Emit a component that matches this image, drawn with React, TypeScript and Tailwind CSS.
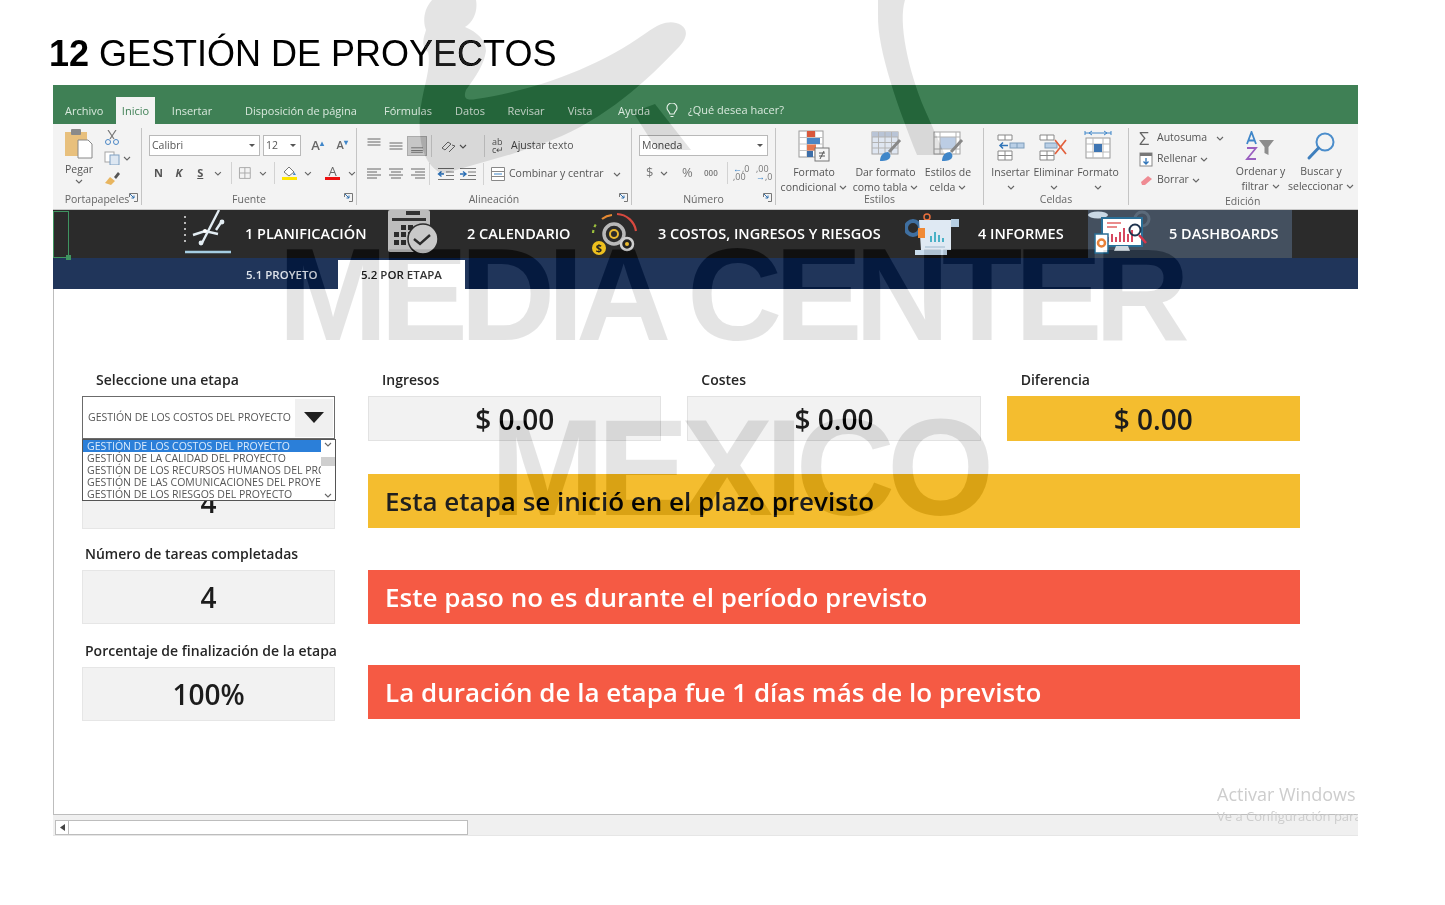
import React from "react";

const UI = "font-['Open_Sans','Noto_Sans',sans-serif]";

const Chev = ({ className = "" }: { className?: string }) => (
  <svg width="8" height="5" viewBox="0 0 8 5" className={className}>
    <path d="M1 1l3 3 3-3" fill="none" stroke="#666" strokeWidth="1.1" />
  </svg>
);

const Lines = ({ rows, pressed }: { rows: [number, number][]; pressed?: boolean }) => (
  <svg width="20" height="20" viewBox="0 0 20 20" className={pressed ? "bg-[#c6c6c6] border border-[#ababab]" : ""}>
    {rows.map(([y, w], i) => (
      <path key={i} d={`M${(20 - w) / 2} ${y}h${w}`} stroke="#666" strokeWidth="1" />
    ))}
  </svg>
);
const AlignI = ({ a }: { a: "l" | "c" | "r" }) => (
  <svg width="16" height="14" viewBox="0 0 16 14">
    {[[2, 14], [5, 10], [8, 14], [11, 10]].map(([y, w], i) => (
      <path key={i} d={`M${a === "l" ? 1 : a === "c" ? 8 - w / 2 : 15 - w} ${y}h${w}`} stroke="#666" strokeWidth="1" />
    ))}
  </svg>
);
const Indent = ({ right }: { right?: boolean }) => (
  <svg width="18" height="14" viewBox="0 0 18 14">
    <path d="M1 1.5h16M9 5h8M9 8.500h8M1 12.500h16" stroke="#777" strokeWidth="1" />
    <path d={right ? "M1 7h5M4 4.500L7 7 4 9.500" : "M7 7H2M4.500 4.500L1.500 7l3 2.500"} stroke="#2b6fb5" strokeWidth="1.4" fill="none" />
  </svg>
);
const Sep = () => <div className="w-px h-[22px] bg-[#d2d2d2]" />;
const Launcher = () => (
  <svg width="9" height="9" viewBox="0 0 9 9" className="absolute right-[3px] bottom-[3px]">
    <path d="M.5 4V.5H8.500V8.500H5" fill="none" stroke="#777" />
    <path d="M1 1l4 4M5 2.500V5H2.500" fill="none" stroke="#2f6fae" />
  </svg>
);

const Group = ({ w, label, launcher, children }: { w: string; label: string; launcher?: boolean; children: React.ReactNode }) => (
  <div className={`${w} relative flex flex-col border-r border-[#c4c4c4] my-[4px]`}>
    <div className="flex-1 min-h-0 relative">{children}</div>
    <div className="h-[14px] leading-[14px] text-center text-[10.5px] text-[#666] -mb-[1px]">{label}</div>
    {launcher && <Launcher />}
  </div>
);

const Sel = ({ w, text }: { w: string; text: string }) => (
  <div className={`${w} h-[21px] bg-white border border-[#b9b9b9] flex items-center justify-between px-[2px] text-[10.5px] text-[#555]`}>
    <span>{text}</span>
    <svg width="6" height="4" viewBox="0 0 6 4" className="mr-[2px]"><path d="M0 0h6L3 3z" fill="#555" /></svg>
  </div>
);

const Big = ({ w, l1, l2, chev2, icon }: { w: string; l1: string; l2?: string; chev2?: boolean; icon: React.ReactNode }) => (
  <div className={`${w} flex flex-col items-center text-[10.5px] leading-[15px] text-[#555]`}>
    <div className="h-[33px] flex items-end justify-center mb-[3px]">{icon}</div>
    <div className="whitespace-nowrap">{l1}</div>
    <div className="whitespace-nowrap flex items-center gap-[3px] h-[15px]">{l2 && <span>{l2}</span>}{chev2 && <Chev />}</div>
  </div>
);

const CondIcon = () => (
  <svg width="32" height="32" viewBox="0 0 32 32">
    <rect x="1" y="1" width="24" height="26" fill="#fff" stroke="#9a9a9a" />
    <path d="M9 1v26M17 1v26M1 7.500h24M1 14h24M1 20.500h24" stroke="#c2c2c2" />
    <rect x="9" y="1" width="8" height="6" fill="#d9583b" />
    <rect x="9" y="8" width="13" height="6" fill="#4a86c5" />
    <rect x="9" y="14.500" width="9" height="6" fill="#e5774f" />
    <rect x="9" y="21" width="6" height="6" fill="#3d6ea8" />
    <rect x="17" y="18" width="14" height="13" fill="#f5f5f5" stroke="#777" />
    <path d="M21 23h6M21 26h6M26 21l-4 8" stroke="#555" fill="none" />
  </svg>
);
const TableIcon = () => (
  <svg width="32" height="32" viewBox="0 0 32 32">
    <rect x="2" y="2" width="26" height="22" fill="#dfe6f1" stroke="#a4a4a4" />
    <rect x="2" y="2" width="26" height="5" fill="#b9c4d6" />
    <path d="M8.500 2v22M15 2v22M21.500 2v22M2 7h26M2 12.500h26M2 18h26" stroke="#b3b3b3" />
    <path d="M30 10L19 22" stroke="#888" strokeWidth="3" />
    <path d="M10 31c0-6 4-9 8-9 3 2 3 5 1 7-3 2-6 2-9 2z" fill="#3f86c9" />
  </svg>
);
const CellStyleIcon = () => (
  <svg width="32" height="32" viewBox="0 0 32 32">
    <rect x="2" y="2" width="26" height="22" fill="#fff" stroke="#a4a4a4" />
    <rect x="8" y="7" width="16" height="12" fill="#bccde4" />
    <path d="M2 7h26M8 2v22M2 19h26M24 2v22" stroke="#b3b3b3" />
    <path d="M30 10L19 22" stroke="#888" strokeWidth="3" />
    <path d="M10 31c0-6 4-9 8-9 3 2 3 5 1 7-3 2-6 2-9 2z" fill="#3f86c9" />
  </svg>
);
const InsertIcon = () => (
  <svg width="28" height="28" viewBox="0 0 28 28">
    <path d="M1 1h14v5H1zM8 1v5M1 17h14v9H1zM8 17v9M1 21.500h14" fill="#fff" stroke="#888" />
    <rect x="13" y="9" width="14" height="5" fill="#b9cfe6" stroke="#7f9ebc" />
    <path d="M20 9v5" stroke="#7f9ebc" />
    <path d="M11 11.500H3M6 8.500l-3 3 3 3" fill="none" stroke="#2f74b8" strokeWidth="1.500" />
  </svg>
);
const DeleteIcon = () => (
  <svg width="30" height="28" viewBox="0 0 30 28">
    <path d="M1 1h14v5H1zM8 1v5M1 17h14v9H1zM8 17v9M1 21.500h14" fill="#fff" stroke="#888" />
    <rect x="6" y="9" width="12" height="5" fill="#b9cfe6" stroke="#7f9ebc" />
    <path d="M16 6l11 14M27 6L16 20" stroke="#e2603d" strokeWidth="1.700" />
  </svg>
);
const FormatIcon = () => (
  <svg width="28" height="32" viewBox="0 0 28 32">
    <path d="M1 3h26M1 1v4M27 1v4M5 3l3-2M5 3l3 2M23 3l-3-2M23 3l-3 2" stroke="#3f86c9" fill="none" />
    <rect x="2" y="8" width="24" height="20" fill="#fff" stroke="#999" />
    <path d="M9 8v20M19 8v20M2 14h24M2 22h24" stroke="#bbb" />
    <rect x="10" y="14" width="8" height="8" fill="#3f76b3" />
  </svg>
);
const SortIcon = () => (
  <svg width="32" height="30" viewBox="0 0 32 30">
    <path d="M2 13L6.500 1 11 13M3.500 9.500h6" fill="none" stroke="#3f86c9" strokeWidth="1.800" />
    <path d="M2 17h9L2 28h9" fill="none" stroke="#9a5fc0" strokeWidth="1.800" />
    <path d="M14 9h15l-5.500 7v8l-4 -2v-6z" fill="#8d8d8d" />
  </svg>
);
const SearchIcon = () => (
  <svg width="30" height="30" viewBox="0 0 30 30">
    <circle cx="19" cy="11" r="8.500" fill="none" stroke="#4b8dcb" strokeWidth="2" />
    <path d="M12.500 17L3 27" stroke="#3f7fbd" strokeWidth="3" strokeLinecap="round" />
  </svg>
);

const NavPlan = () => (
  <svg width="52" height="48" viewBox="0 0 52 48">
    <path d="M2 6v28" stroke="#ddd" strokeWidth="1.600" strokeDasharray="2 4" />
    <path d="M10 25l12 -4 13 3M36 0L19 33M33 20l6-9" stroke="#e3edf3" strokeWidth="2.400" fill="none" />
    <circle cx="22" cy="21" r="2" fill="#fff" /><circle cx="18" cy="33" r="2.400" fill="#e3edf3" /><circle cx="39" cy="12" r="2.400" fill="#e3edf3" />
    <path d="M2 42h46" stroke="#a5cde2" strokeWidth="2.600" />
  </svg>
);
const NavCal = () => (
  <svg width="54" height="48" viewBox="0 0 54 48">
    <rect x="2" y="0" width="42" height="42" rx="2" fill="#bdbdbd" />
    <rect x="20" y="1" width="14" height="4" fill="#333" />
    <rect x="6" y="8" width="34" height="3" fill="#333" />
    {[[8, 22], [15, 22], [22, 22], [8, 30], [15, 30], [15, 15], [22, 15]].map(([x, y], i) => (
      <rect key={i} x={x} y={y} width="5" height="5" fill="#2b2b2b" />
    ))}
    <circle cx="37" cy="29" r="15" fill="#c9c9c9" stroke="#2b2b2b" strokeWidth="1.500" />
    <path d="M28 29l6 5 10-9" fill="none" stroke="#2b2b2b" strokeWidth="2.400" />
  </svg>
);
const NavCost = () => (
  <svg width="50" height="46" viewBox="0 0 50 46">
    <path d="M27 3a20 20 0 0 1 19 17" fill="none" stroke="#d8493f" strokeWidth="2.200" />
    <path d="M12 8a20 20 0 0 1 10-4" fill="none" stroke="#e88a32" strokeWidth="2.200" />
    <path d="M3 22a20 20 0 0 1 3-9" fill="none" stroke="#9bbf3d" strokeWidth="2.200" strokeDasharray="3 3" />
    <circle cx="24" cy="23" r="10" fill="none" stroke="#b9b9b9" strokeWidth="3.500" />
    <circle cx="24" cy="23" r="4" fill="none" stroke="#e9b92f" strokeWidth="2" />
    <circle cx="37" cy="33" r="6" fill="#222" stroke="#cfcfcf" strokeWidth="2.500" />
    <circle cx="37" cy="33" r="2" fill="#e9b92f" />
    <circle cx="9" cy="37" r="7" fill="#eec01e" />
    <text x="9" y="41" fontSize="11" fontWeight="700" textAnchor="middle" fill="#222">$</text>
  </svg>
);
const NavInf = () => (
  <svg width="56" height="44" viewBox="0 0 56 44">
    <circle cx="8" cy="16" r="7" fill="none" stroke="#3f6fa0" strokeWidth="4" />
    <circle cx="22" cy="5" r="3" fill="none" stroke="#e8703d" strokeWidth="1.500" />
    <path d="M14 8h36l4 3v4h-8v23H16z" fill="#dfe9f3" />
    <path d="M46 7h8v8h-8z" fill="#b7cfe3" />
    <rect x="13" y="16" width="7" height="10" fill="#f08a36" />
    <path d="M26 30v-6M30 30v-10M34 30v-7M38 30v-4" stroke="#4ab1c6" strokeWidth="2" />
    <path d="M10 38h32v5H10z" fill="#c9dcec" />
    <path d="M20 35h20" stroke="#9db8cc" />
  </svg>
);
const NavDash = () => (
  <svg width="66" height="48" viewBox="0 0 66 48">
    <ellipse cx="10" cy="5" rx="10" ry="3.500" fill="#c9d8e5" />
    <circle cx="54" cy="9" r="7" fill="none" stroke="#5b6a7a" strokeWidth="3" />
    <rect x="14" y="8" width="40" height="28" fill="#fff" stroke="#2a6f97" strokeWidth="2" />
    <path d="M19 13h14M19 17h10" stroke="#e98b8b" strokeWidth="2" />
    <path d="M20 32v-5M24 32v-8M28 32v-5M32 32v-10M36 32v-14M40 32v-8M44 32v-12" stroke="#d2354f" strokeWidth="1.800" />
    <path d="M28 36h12l2 5H26z" fill="#cfd8df" />
    <rect x="7" y="24" width="13" height="19" fill="#fff" stroke="#2a6f97" strokeWidth="1.500" />
    <circle cx="13.500" cy="33" r="3.500" fill="none" stroke="#e8823a" strokeWidth="2.500" />
    <circle cx="47" cy="20" r="5.500" fill="none" stroke="#20344f" strokeWidth="2" />
    <path d="M51 25l7 8" stroke="#d8354a" strokeWidth="2.500" />
  </svg>
);

const Lbl = ({ className = "", children }: { className?: string; children: React.ReactNode }) => (
  <div className={`h-[20px] leading-[20px] text-[14px] font-semibold text-[#262626] whitespace-nowrap ${className}`}>{children}</div>
);

const Box = ({ className = "", children }: { className?: string; children: React.ReactNode }) => (
  <div className={`border border-[#e6e6e6] bg-[#f2f2f2] flex items-center justify-center font-semibold text-[#1c1c1c] ${className}`}>{children}</div>
);

const Banner = ({ className = "", children }: { className?: string; children: React.ReactNode }) => (
  <div className={`h-[54px] flex items-center pl-[17px] text-[26px] font-semibold whitespace-nowrap ${className}`}>{children}</div>
);

const tabs: [string, string][] = [
  ["Insertar", "w-[74px]"],
  ["Disposición de página", "w-[144px]"],
  ["Fórmulas", "w-[70px]"],
  ["Datos", "w-[54px]"],
  ["Revisar", "w-[58px]"],
  ["Vista", "w-[50px]"],
  ["Ayuda", "w-[58px]"],
];

const options = [
  "GESTIÓN DE LA CALIDAD DEL PROYECTO",
  "GESTIÓN DE LOS RECURSOS HUMANOS DEL PROYECTO",
  "GESTIÓN DE LAS COMUNICACIONES DEL PROYECTO",
  "GESTIÓN DE LOS RIESGOS DEL PROYECTO",
];

export default function App() {
  return (
    <div className={`relative isolate bg-white w-[1445px] h-[905px] overflow-hidden ${UI}`}>
      <h1 className="h-[85px] pl-[49px] pt-[31px] text-[36px] leading-[46px] text-black font-['Liberation_Sans',sans-serif] font-normal whitespace-nowrap">
        <b>12</b> GESTIÓN DE PROYECTOS
      </h1>

      <div className="ml-[53px] w-[1305px]">
        {/* green title + tabs */}
        <div className="h-[39px] bg-[#3f8055] pt-[12px] pl-[0px] flex text-[11px] text-[#d9e8dd]">
          <div className="w-[63px] h-[27px] leading-[27px] pl-[12px]">Archivo</div>
          <div className="w-[39px] h-[27px] leading-[27px] text-center bg-[#f3f3f3] text-[#3f8055]">Inicio</div>
          {tabs.map(([t, w]) => (
            <div key={t} className={`${w} h-[27px] leading-[27px] text-center whitespace-nowrap`}>{t}</div>
          ))}
          <div className="flex items-center gap-[10px] h-[27px] ml-[3px]">
            <svg width="12" height="15" viewBox="0 0 12 15"><path d="M4 11C3.500 8.500 1 7.500 1 5a5 5 0 0 1 10 0c0 2.500-2.500 3.500-3 6zM4.500 13.500h3" fill="none" stroke="#e8f1ea" strokeWidth="1.100" /></svg>
            <span>¿Qué desea hacer?</span>
          </div>
        </div>

        {/* ribbon */}
        <div className="h-[86px] bg-[#f3f3f3] border-b border-[#c9c9c9] flex text-[#555]">
          <Group w="w-[89px]" label="Portapapeles" launcher>
            <div className="flex h-full pt-[1px]">
              <div className="w-[51px] flex flex-col items-center pl-[1px] text-[10.5px] leading-[14px]">
                <svg width="30" height="30" viewBox="0 0 30 30">
                  <rect x="1" y="3" width="22" height="24" fill="#e8c07d" />
                  <rect x="7" y="0" width="10" height="6" rx="1" fill="#8a8a8a" />
                  <path d="M14 11h10l4 4v14H14z" fill="#fff" stroke="#888" />
                </svg>
                <div className="mt-[3px]">Pegar</div>
                <Chev className="mt-[3px]" />
              </div>
              <div className="flex flex-col gap-[6px] pt-[1px]">
                <svg width="16" height="15" viewBox="0 0 16 15"><path d="M4 0l6 9M12 0L6 9" stroke="#777" strokeWidth="1.200" /><circle cx="4" cy="12" r="2.500" fill="none" stroke="#4a86c5" /><circle cx="12" cy="12" r="2.500" fill="none" stroke="#4a86c5" /></svg>
                <div className="flex items-center gap-[3px]">
                  <svg width="16" height="14" viewBox="0 0 16 14"><rect x="1" y="1" width="9" height="10" fill="#fff" stroke="#a5a5a5" /><rect x="6" y="4" width="9" height="10" fill="#dde7f2" stroke="#7fa0c2" /></svg>
                  <Chev />
                </div>
                <svg width="16" height="14" viewBox="0 0 16 14"><path d="M10 6l4-5 2 2-4 5z" fill="#555" /><path d="M1 12l5-6 5 4-4 4z" fill="#e8b55f" /></svg>
              </div>
            </div>
          </Group>

          <Group w="w-[215px]" label="Fuente" launcher>
            <div className="pl-[7px] pt-[7px] flex flex-col">
              <div className="flex items-center gap-[3px]">
                <Sel w="w-[114px]" text="Calibri" />
                <Sel w="w-[39px]" text="12" />
                <span className="ml-[7px] w-[23px] text-[13px] text-[#666] font-semibold">A<sup className="text-[#3f86c9] text-[8px]">▴</sup></span>
                <span className="w-[20px] text-[11px] text-[#666] font-semibold">A<sup className="text-[#3f86c9] text-[8px]">▾</sup></span>
              </div>
              <div className="flex items-center h-[22px] mt-[6px] pl-[5px] text-[11px] font-bold text-[#555]">
                <span className="w-[22px]">N</span>
                <span className="w-[22px] italic">K</span>
                <span className="w-[17px] underline">S</span>
                <Chev className="mr-[9px]" />
                <Sep />
                <svg width="16" height="14" viewBox="0 0 16 14" className="ml-[5px] mr-[7px]"><path d="M2.500 1.500h11v11h-11zM8 1.500v11M2.500 7h11" fill="none" stroke="#aaa" /></svg>
                <Chev className="mr-[7px]" />
                <Sep />
                <div className="ml-[6px] mr-[7px] w-[16px] flex flex-col items-center">
                  <svg width="16" height="11" viewBox="0 0 16 11"><path d="M3 6l5-5 5 5-5 4z" fill="#fff" stroke="#777" /><path d="M13 6l2 3h-3z" fill="#3f86c9" /></svg>
                  <div className="w-[15px] h-[3px] bg-[#ffe600]" />
                </div>
                <Chev className="mr-[13px]" />
                <div className="w-[15px] flex flex-col items-center leading-[11px] mr-[8px]">
                  <span className="text-[13px] font-normal h-[11px] text-[#666]">A</span>
                  <div className="w-[15px] h-[3px] bg-[#ee1111]" />
                </div>
                <Chev />
              </div>
            </div>
          </Group>

          <Group w="w-[275px]" label="Alineación" launcher>
            <div className="pl-[7px] pt-[7px] flex flex-col">
              <div className="flex items-center h-[22px]">
                <div className="flex w-[67px] items-center justify-between pr-[4px]">
                  <Lines rows={[[3, 13], [6, 13], [9, 13]]} />
                  <Lines rows={[[7, 13], [10, 13], [13, 13]]} />
                  <Lines rows={[[12, 13], [15, 13], [17, 13]]} pressed />
                </div>
                <Sep />
                <svg width="16" height="15" viewBox="0 0 16 15" className="ml-[8px]"><path d="M2 9l6-6 3 2-6 6zM12 6l3 1-6 6" fill="none" stroke="#777" /></svg>
                <Chev className="ml-[3px] mr-[17px]" />
                <Sep />
                <span className="ml-[7px] w-[16px] text-[9px] leading-[8px] text-[#666]">ab<br />c↵</span>
                <span className="ml-[3px] text-[10.5px]">Ajustar texto</span>
              </div>
              <div className="flex items-center h-[22px] mt-[6px]">
                <div className="flex w-[65px] items-center justify-between pl-[2px] pr-[3px]">
                  <AlignI a="l" /><AlignI a="c" /><AlignI a="r" />
                </div>
                <Sep />
                <div className="flex gap-[4px] ml-[7px] mr-[6px]"><Indent /><Indent right /></div>
                <Sep />
                <svg width="14" height="14" viewBox="0 0 14 14" className="ml-[7px]"><path d="M.5.500h13v13H.5zM.5 4.500h13M.5 9.500h13" fill="#fff" stroke="#888" /><path d="M3 7h8" stroke="#3f86c9" /></svg>
                <span className="ml-[4px] text-[10.5px] whitespace-nowrap">Combinar y centrar</span>
                <Chev className="ml-[9px]" />
              </div>
            </div>
          </Group>

          <Group w="w-[144px]" label="Número" launcher>
            <div className="pl-[7px] pt-[7px] flex flex-col">
              <Sel w="w-[129px]" text="Moneda" />
              <div className="flex items-center h-[22px] mt-[6px] pl-[7px] text-[#777]">
                <span className="text-[13px] w-[14px]">$</span>
                <Chev className="mr-[14px]" />
                <span className="text-[13px] w-[22px]">%</span>
                <span className="text-[8px] w-[23px] font-semibold">000</span>
                <Sep />
                <span className="ml-[5px] w-[23px] text-[9px] leading-[8px]"><span className="text-[#3f86c9]">←</span>,0<br />,00</span>
                <span className="w-[18px] text-[9px] leading-[8px]">,00<br /><span className="text-[#3f86c9]">→</span>,0</span>
              </div>
            </div>
          </Group>

          <Group w="w-[208px]" label="Estilos">
            <div className="flex pt-[1px] pl-[3px]">
              <Big w="w-[70px]" l1="Formato" l2="condicional" chev2 icon={<CondIcon />} />
              <Big w="w-[73px]" l1="Dar formato" l2="como tabla" chev2 icon={<TableIcon />} />
              <Big w="w-[52px]" l1="Estilos de" l2="celda" chev2 icon={<CellStyleIcon />} />
            </div>
          </Group>

          <Group w="w-[145px]" label="Celdas">
            <div className="flex pt-[1px] pl-[5px]">
              <Big w="w-[43px]" l1="Insertar" chev2 icon={<InsertIcon />} />
              <Big w="w-[43px]" l1="Eliminar" chev2 icon={<DeleteIcon />} />
              <Big w="w-[46px]" l1="Formato" chev2 icon={<FormatIcon />} />
            </div>
          </Group>

          <div className="flex-1 my-[4px] flex flex-col relative">
            <div className="flex-1 flex pl-[10px]">
              <div className="w-[94px] flex flex-col gap-[3px] text-[10.5px] pt-[1px]">
                <div className="flex items-center h-[18px] gap-[3px]">
                  <span className="w-[15px] text-[18px] leading-[18px] text-[#666]">Σ</span>
                  <span>Autosuma</span>
                  <Chev className="ml-[6px]" />
                </div>
                <div className="flex items-center h-[18px] gap-[3px]">
                  <svg width="15" height="15" viewBox="0 0 15 15"><rect x="1" y="1" width="12" height="13" fill="#fff" stroke="#888" /><rect x="1" y="1" width="12" height="3" fill="#777" /><path d="M7 6v6M4.500 9.500L7 12l2.500-2.500" fill="none" stroke="#2f74b8" strokeWidth="1.300" /></svg>
                  <span>Rellenar</span><Chev />
                </div>
                <div className="flex items-center h-[18px] gap-[3px]">
                  <svg width="15" height="13" viewBox="0 0 15 13"><path d="M2 8l7-6 4 3-7 6H3z" fill="#ef8b93" /></svg>
                  <span>Borrar</span><Chev />
                </div>
              </div>
              <Big w="w-[55px]" l1="Ordenar y" l2="filtrar" chev2 icon={<SortIcon />} />
              <Big w="w-[66px]" l1="Buscar y" l2="seleccionar" chev2 icon={<SearchIcon />} />
            </div>
            <div className="h-[14px] leading-[14px] -mb-[1px] text-[10.5px] text-[#666] pl-[96px]">Edición</div>
          </div>
        </div>

        {/* dark nav */}
        <div className="h-[48px] bg-[#2b2b2b] flex items-center text-white text-[14.5px] font-semibold whitespace-nowrap">
          <div className="w-[16px] h-[47px] border-[1.5px] border-[#3f9460] relative">
            <div className="absolute -bottom-[3px] -right-[3px] w-[5px] h-[5px] bg-[#3f9460]" />
          </div>
          <div className="ml-[114px] w-[52px]"><NavPlan /></div>
          <div className="ml-[10px] w-[141px]">1 PLANIFICACIÓN</div>
          <div className="w-[54px]"><NavCal /></div>
          <div className="ml-[27px] w-[123px]">2 CALENDARIO</div>
          <div className="w-[50px]"><NavCost /></div>
          <div className="ml-[18px] w-[247px]">3 COSTOS, INGRESOS Y RIESGOS</div>
          <div className="w-[56px]"><NavInf /></div>
          <div className="ml-[17px] w-[110px]">4 INFORMES</div>
          <div className="w-[204px] h-[48px] bg-[#44505f] flex items-center">
            <NavDash />
            <span className="ml-[15px]">5 DASHBOARDS</span>
          </div>
        </div>

        {/* navy sub tabs */}
        <div className="h-[31px] bg-[#20355a] flex items-end text-[11.5px] font-semibold whitespace-nowrap">
          <div className="ml-[193px] w-[92px] h-[31px] leading-[33px] text-[#dfe4ec]">5.1 PROYETO</div>
          <div className="w-[127px] h-[29px] leading-[29px] bg-white text-[#333] text-center">5.2 POR ETAPA</div>
        </div>

        {/* sheet */}
        <div className="h-[526px] bg-white border-l border-b border-[#bdbdbd] flex pl-[28px]">
          <div className="relative w-[253px] pt-[81px] shrink-0">
            <Lbl className="ml-[14px] mb-[6px]">Seleccione una etapa</Lbl>
            <div className="h-[43px] border-[1.5px] border-[#6b6b6b] flex items-center bg-white">
              <span className="pl-[5px] text-[10.5px] text-[#555] whitespace-nowrap flex-1 font-medium">GESTIÓN DE LOS COSTOS DEL PROYECTO</span>
              <div className="w-[38px] h-[38px] bg-[#f0f0f0] flex items-center justify-center mr-[1px]">
                <svg width="20" height="11" viewBox="0 0 20 11"><path d="M0 0h20L10 11z" fill="#1f1f1f" /></svg>
              </div>
            </div>

            {/* open list */}
            <div className="absolute z-10 left-0 top-[150px] w-[254px] h-[62px] bg-white border border-[#555] flex text-[10.5px] leading-[12px] text-[#555] font-medium overflow-hidden">
              <div className="w-[238px] overflow-hidden whitespace-nowrap pl-0">
                <div className="h-[12px] bg-[#2b7fd9] text-[#dcebfb] pl-[4px]">GESTIÓN DE LOS COSTOS DEL PROYECTO</div>
                {options.map((o) => (
                  <div key={o} className="h-[12px] pl-[4px]">{o}</div>
                ))}
              </div>
              <div className="flex-1 flex flex-col items-center justify-between py-[2px]">
                <Chev />
                <div className="w-[14px] h-[9px] bg-[#cfcfcf] -mt-[18px]" />
                <Chev className="rotate-0" />
              </div>
            </div>

            <Box className="h-[54px] mt-[36px] text-[28px]">4</Box>
            <Lbl className="ml-[3px] mt-[15px] mb-[6px]">Número de tareas completadas</Lbl>
            <Box className="h-[54px] text-[28px]">4</Box>
            <Lbl className="ml-[3px] mt-[17px] mb-[6px]">Porcentaje de finalización de la etapa</Lbl>
            <Box className="h-[54px] text-[28px]">100%</Box>
          </div>

          <div className="ml-[33px] w-[932px] pt-[81px]">
            <div className="grid grid-cols-3 gap-x-[26px]">
              {[
                ["Ingresos", "bg-[#f2f2f2] border-[#e2e2e2]"],
                ["Costes", "bg-[#f2f2f2] border-[#e2e2e2]"],
                ["Diferencia", "bg-[#f4bd2f] border-[#f4bd2f]"],
              ].map(([l, c]) => (
                <div key={l}>
                  <Lbl className="ml-[14px] mb-[6px]">{l}</Lbl>
                  <div className={`h-[45px] border flex items-center justify-center text-[28px] font-semibold text-[#1c1c1c] ${c}`}>$ 0.00</div>
                </div>
              ))}
            </div>
            <Banner className="mt-[33px] bg-[#f4bd2f] text-[#1f1f1f]">Esta etapa se inició en el plazo previsto</Banner>
            <Banner className="mt-[42px] bg-[#f55a44] text-white">Este paso no es durante el período previsto</Banner>
            <Banner className="mt-[41px] bg-[#f55a44] text-white">La duración de la etapa fue 1 días más de lo previsto</Banner>
          </div>
        </div>

        {/* scrollbar */}
        <div className="h-[21px] bg-[#f0f0f0] pt-[5px] pl-[2px] border-b border-[#e6e6e6]">
          <div className="w-[413px] h-[15px] bg-white border border-[#bdbdbd] flex">
            <div className="w-[13px] border-r border-[#bdbdbd] flex items-center justify-center">
              <svg width="5" height="7" viewBox="0 0 5 7"><path d="M5 0v7L0 3.500z" fill="#444" /></svg>
            </div>
          </div>
        </div>
      </div>

      {/* Activar Windows */}
      <div className="absolute left-[1217px] top-[782px] w-[141px] overflow-hidden whitespace-nowrap text-[#cdcdcd]">
        <div className="text-[18px] leading-[24px]">Activar Windows</div>
        <div className="text-[13px] leading-[18px] mt-[1px]">Ve a Configuración para activar Windows</div>
      </div>

      {/* watermark */}
      <div className="absolute inset-0 pointer-events-none mix-blend-difference">
        <svg width="1445" height="905" viewBox="0 0 1445 905" className="absolute left-0 top-0">
          <path d="M432 0h44c2 10-2 22-11 27 12 5 21 13 21 24-2 14-10 25-20 39-3 8 0 11 10 9 55-8 120-30 170-66 18-13 27-12 35-8 8 5 6 14-4 24-40 42-80 75-135 95l-30 10-70 20c-18-10-24-30-22-60 2-24 12-46 8-62-8-6-4-15-2-22 -3-7-3-20 6-30z" fill="#1b1b1b" />
          <path d="M878 0h27c-7 22 3 70 20 110l20 45h-28c-18-45-40-105-39-140z" fill="#1b1b1b" />
          <path d="M633 112l22-8 36 46h-34z" fill="#1b1b1b" />
        </svg>
        <div className="absolute left-[278px] top-[222px] text-[132px] leading-[146px] font-bold text-[#1b1b1b] tracking-[-8px] whitespace-nowrap font-['Liberation_Sans',sans-serif]">MEDIA CENTER</div>
        <div className="absolute left-[490px] top-[394px] text-[138px] leading-[146px] font-bold text-[#1b1b1b] tracking-[-8px] whitespace-nowrap font-['Liberation_Sans',sans-serif]">MEXICO</div>
      </div>
    </div>
  );
}
